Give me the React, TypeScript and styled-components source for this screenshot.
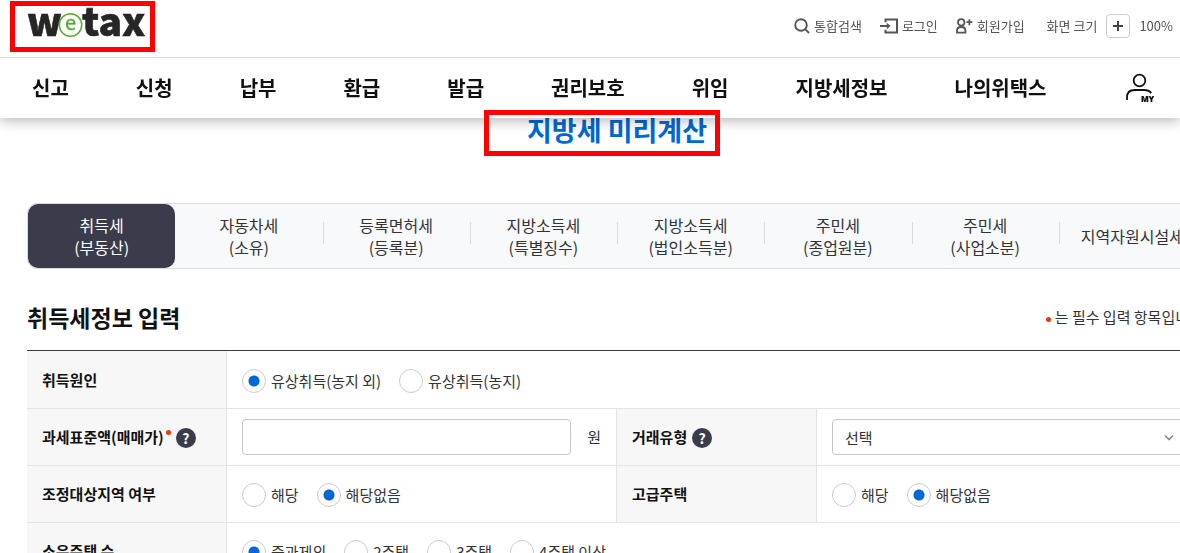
import React from "react";
import styled, { createGlobalStyle, css } from "styled-components";

const GlobalStyle = createGlobalStyle`
  *, *::before, *::after { box-sizing: border-box; }
  html, body { margin: 0; padding: 0; background: #fff; }
  body, button, input, select {
    font-family: "Noto Sans CJK KR", "Noto Sans", sans-serif;
    color: #333;
  }
`;

const Page = styled.div`
  position: relative;
  height: 100vh;
  overflow: hidden;
  font-size: 15px;
  line-height: 22px;
`;

const Header = styled.header`
  position: fixed;
  inset: 0 0 auto 0;
  z-index: 10;
  background: #fff;
  box-shadow: 0 3px 12px rgba(0, 0, 0, 0.28);
`;

const TopBar = styled.div`
  display: flex;
  justify-content: space-between;
  align-items: flex-start;
  height: 58px;
  padding: 0 7px 0 27px;
  border-bottom: 1px solid #ddd;
`;

const LogoLink = styled.a`
  display: block;
  padding-top: 4px;
  svg { display: block; }
`;

const Utilities = styled.div`
  display: flex;
  align-items: center;
  padding-top: 14px;
  gap: 18px;
  font-size: 13px;
  line-height: 24px;
  color: #555;
`;

const UtilityLink = styled.a`
  display: flex;
  align-items: center;
  gap: 4px;
  color: #555;
  text-decoration: none;
  svg { display: block; }
`;

const ZoomControl = styled.div`
  display: flex;
  align-items: center;
  gap: 9px;
  padding-left: 4px;
`;

const ZoomButton = styled.button`
  display: grid;
  place-items: center;
  width: 24px;
  height: 24px;
  padding: 0;
  border: 1px solid #ccc;
  border-radius: 4px;
  background: #fff;
`;

const Nav = styled.nav`
  display: flex;
  align-items: center;
  justify-content: space-between;
  height: 60px;
  padding: 0 24px 0 32px;
`;

const NavList = styled.ul`
  display: flex;
  gap: 67px;
  margin: 0;
  padding: 0;
  list-style: none;
`;

const NavLink = styled.a`
  font-size: 20px;
  line-height: 30px;
  font-weight: 700;
  color: #111;
  text-decoration: none;
  white-space: nowrap;
`;

const MyLink = styled.a`
  display: block;
  svg { display: block; }
`;

const Main = styled.main`
  margin: 0 -27px 0 27px;
  padding-top: 110px;
`;

const Title = styled.h1`
  margin: 0;
  font-size: 27px;
  line-height: 40px;
  font-weight: 700;
  text-align: center;
  color: #0068d6;
`;

const Tabs = styled.div`
  display: flex;
  height: 66px;
  margin-top: 53px;
  border: 1px solid #d9dbde;
  border-radius: 10px;
  background: #f7f9fb;
`;

const Tab = styled.button<{ $active?: boolean; $divided?: boolean }>`
  position: relative;
  flex: 1 1 0;
  padding: 0;
  border: 0;
  border-radius: 10px;
  background: transparent;
  font-size: 16px;
  line-height: 22px;
  white-space: pre-line;
  ${(p) => p.$active && css`
    background: #3a3b4b;
    color: #fff;
  `}
  ${(p) => p.$divided && css`
    &::before {
      content: "";
      position: absolute;
      left: 0;
      top: 18px;
      width: 1px;
      height: 22px;
      background: #d9dbde;
    }
  `}
`;

const SectionHead = styled.div`
  display: flex;
  align-items: center;
  justify-content: space-between;
  margin-top: 28px;
  height: 40px;
`;

const SectionTitle = styled.h2`
  margin: 0;
  font-size: 23px;
  line-height: 40px;
  font-weight: 700;
  color: #111;
`;

const RequiredNote = styled.p`
  display: flex;
  align-items: center;
  gap: 4px;
  margin: 0;
`;

const Dot = styled.span`
  width: 5px;
  height: 5px;
  margin-top: 4px;
  border-radius: 50%;
  background: #e83a05;
`;

const FormTable = styled.table`
  width: 100%;
  margin-top: 13px;
  border-collapse: separate;
  border-spacing: 0;
  border-top: 1px solid #3a3b4b;
  table-layout: fixed;

  th, td {
    height: 57px;
    padding: 0 15px;
    border-right: 1px solid #e4e4e4;
    border-bottom: 1px solid #e4e4e4;
    text-align: left;
  }
  tr:first-child > * { height: 58px; }
  th {
    background: #f7f7f7;
    font-weight: 700;
    color: #111;
  }
`;

const LabelCol = styled.col`
  width: 200px;
`;

const HeadLabel = styled.div`
  display: flex;
  align-items: center;
`;

const RequiredDot = styled(Dot)`
  align-self: flex-start;
  margin-left: 2px;
`;

const HelpButton = styled.button`
  width: 20px;
  height: 20px;
  margin: 2px 0 0 5px;
  padding: 0;
  border: 0;
  border-radius: 50%;
  background: #3a3b4b;
  color: #fff;
  font-size: 14px;
  line-height: 20px;
  font-weight: 700;
  text-align: center;
`;

const Options = styled.div`
  display: flex;
  gap: 18px;
  padding-top: 2px;
`;

const Option = styled.label`
  display: flex;
  align-items: center;
  gap: 5px;
  white-space: nowrap;
`;

const Radio = styled.input`
  appearance: none;
  flex: none;
  width: 24px;
  height: 24px;
  margin: 0;
  border: 1px solid #ccc;
  border-radius: 50%;
  background: #fff;
  &:checked {
    background: radial-gradient(circle, #0068d6 0 5px, #fff 6px);
  }
`;

const AmountField = styled.div`
  display: flex;
  align-items: center;
  gap: 16px;
`;

const fieldBox = css`
  height: 36px;
  border: 1px solid #c6c6c6;
  border-radius: 4px;
  background: #fff;
  font-size: 15px;
`;

const TextInput = styled.input`
  ${fieldBox}
  flex: 1;
  min-width: 0;
  padding: 0 12px;
`;

const SelectWrap = styled.div`
  position: relative;
  svg {
    position: absolute;
    right: 17px;
    top: 15px;
    pointer-events: none;
  }
`;

const Select = styled.select`
  ${fieldBox}
  display: block;
  appearance: none;
  width: 100%;
  padding: 0 12px;
`;

const Highlight = styled.div<{ $x: number; $y: number; $w: number; $h: number }>`
  position: absolute;
  z-index: 20;
  left: ${(p) => p.$x}px;
  top: ${(p) => p.$y}px;
  width: ${(p) => p.$w}px;
  height: ${(p) => p.$h}px;
  border: 5px solid #f00;
  pointer-events: none;
`;

const Logo = () => (
  <svg width="120" height="36" viewBox="0 0 120 36" role="img" aria-label="wetax">
    <g
      fill="#262626"
      stroke="#262626"
      strokeWidth="0.6"
      fontFamily="Noto Sans CJK KR, sans-serif"
      fontWeight="900"
      fontSize="39"
    >
      <text x="0" y="32">w</text>
      <text x="55" y="32">tax</text>
    </g>
    <circle cx="43.5" cy="21" r="11.2" fill="#fff" stroke="#56ab2f" strokeWidth="1.5" />
    <text
      x="43.5"
      y="26"
      textAnchor="middle"
      fill="#56ab2f"
      stroke="#56ab2f"
      strokeWidth="0.4"
      fontFamily="Open Sans, sans-serif"
      fontSize="20"
    >
      e
    </text>
  </svg>
);

const SearchIcon = () => (
  <svg width="16" height="16" viewBox="0 0 16 16" fill="none" stroke="#555" strokeWidth="1.9">
    <circle cx="7" cy="7" r="5.8" />
    <path d="M11.2 11.2 15 15" />
  </svg>
);

const LoginIcon = () => (
  <svg width="18" height="16" viewBox="0 0 18 16" fill="none" stroke="#555" strokeWidth="2">
    <path d="M5.5 4.200V1.500H17v13H5.500v-2.700" />
    <path d="M0 8h8" />
    <path d="M6.800 4.800 10.600 8l-3.800 3.200z" fill="#555" stroke="none" />
  </svg>
);

const JoinIcon = () => (
  <svg width="17" height="16" viewBox="0 0 17 16" fill="none" stroke="#555" strokeWidth="1.8">
    <circle cx="5.2" cy="4.4" r="3.2" />
    <path d="M1 14.6v-2.2C1 10 2.6 9 5.200 9s4.200 1 4.200 3.400v2.200z" />
    <path d="M10.400 4.200h6M13.400 1.200v6" />
  </svg>
);

const PlusIcon = () => (
  <svg width="12" height="12" viewBox="0 0 12 12" stroke="#444" strokeWidth="2">
    <path d="M6 1v10M1 6h10" />
  </svg>
);

const MyIcon = () => (
  <svg width="30" height="30" viewBox="0 0 30 30" fill="none" stroke="#111" strokeWidth="1.8">
    <circle cx="13.500" cy="7.500" r="5.800" />
    <path d="M1 27v-2.500c0-5 3-7.500 7.500-7.500h9.500c3.500 0 6 1 7.200 3.200" />
    <text
      x="15"
      y="29"
      fill="#111"
      stroke="#111"
      strokeWidth="0.2"
      fontFamily="Open Sans, sans-serif"
      fontWeight="800"
      fontSize="8"
    >
      MY
    </text>
  </svg>
);

const ChevronIcon = () => (
  <svg width="10" height="8" viewBox="0 0 10 8" fill="none" stroke="#888" strokeWidth="1.6">
    <path d="M1 1.500 5 5.500 9 1.500" />
  </svg>
);

const menu = ["신고", "신청", "납부", "환급", "발급", "권리보호", "위임", "지방세정보", "나의위택스"];

const taxes = [
  "취득세\n(부동산)",
  "자동차세\n(소유)",
  "등록면허세\n(등록분)",
  "지방소득세\n(특별징수)",
  "지방소득세\n(법인소득분)",
  "주민세\n(종업원분)",
  "주민세\n(사업소분)",
  "지역자원시설세",
];

type RadioGroupProps = { name: string; label: string; options: string[]; selected: number };

const RadioGroup = ({ name, label, options, selected }: RadioGroupProps) => (
  <Options role="radiogroup" aria-label={label}>
    {options.map((text, i) => (
      <Option key={text}>
        <Radio type="radio" name={name} defaultChecked={i === selected} />
        {text}
      </Option>
    ))}
  </Options>
);

export default function App() {
  return (
    <Page>
      <GlobalStyle />
      <Header>
        <TopBar>
          <LogoLink href="#home"><Logo /></LogoLink>
          <Utilities>
            <UtilityLink href="#search"><SearchIcon />통합검색</UtilityLink>
            <UtilityLink href="#login"><LoginIcon />로그인</UtilityLink>
            <UtilityLink href="#join"><JoinIcon />회원가입</UtilityLink>
            <ZoomControl>
              <span>화면 크기</span>
              <ZoomButton type="button" aria-label="화면 확대"><PlusIcon /></ZoomButton>
              <span>100%</span>
            </ZoomControl>
          </Utilities>
        </TopBar>
        <Nav>
          <NavList>
            {menu.map((item) => (
              <li key={item}><NavLink href="#menu">{item}</NavLink></li>
            ))}
          </NavList>
          <MyLink href="#my" aria-label="나의 메뉴"><MyIcon /></MyLink>
        </Nav>
      </Header>

      <Main>
        <Title>지방세 미리계산</Title>
        <Tabs role="tablist">
          {taxes.map((tax, i) => (
            <Tab key={tax} type="button" role="tab" aria-selected={i === 0} $active={i === 0} $divided={i > 1}>
              {tax}
            </Tab>
          ))}
        </Tabs>

        <SectionHead>
          <SectionTitle>취득세정보 입력</SectionTitle>
          <RequiredNote><Dot />는 필수 입력 항목입니다.</RequiredNote>
        </SectionHead>

        <FormTable>
          <colgroup>
            <LabelCol />
            <col />
            <LabelCol />
            <col />
          </colgroup>
          <tbody>
            <tr>
              <th scope="row">취득원인</th>
              <td colSpan={3}>
                <RadioGroup name="cause" label="취득원인" options={["유상취득(농지 외)", "유상취득(농지)"]} selected={0} />
              </td>
            </tr>
            <tr>
              <th scope="row">
                <HeadLabel>
                  <label htmlFor="amount">과세표준액(매매가)</label>
                  <RequiredDot />
                  <HelpButton type="button">?</HelpButton>
                </HeadLabel>
              </th>
              <td>
                <AmountField>
                  <TextInput id="amount" type="text" />
                  <span>원</span>
                </AmountField>
              </td>
              <th scope="row">
                <HeadLabel>
                  <label htmlFor="deal">거래유형</label>
                  <HelpButton type="button">?</HelpButton>
                </HeadLabel>
              </th>
              <td>
                <SelectWrap>
                  <Select id="deal"><option>선택</option></Select>
                  <ChevronIcon />
                </SelectWrap>
              </td>
            </tr>
            <tr>
              <th scope="row">조정대상지역 여부</th>
              <td>
                <RadioGroup name="area" label="조정대상지역 여부" options={["해당", "해당없음"]} selected={1} />
              </td>
              <th scope="row">고급주택</th>
              <td>
                <RadioGroup name="luxury" label="고급주택" options={["해당", "해당없음"]} selected={1} />
              </td>
            </tr>
            <tr>
              <th scope="row">소유주택 수</th>
              <td colSpan={3}>
                <RadioGroup
                  name="houses"
                  label="소유주택 수"
                  options={["중과제외", "2주택", "3주택", "4주택 이상"]}
                  selected={0}
                />
              </td>
            </tr>
          </tbody>
        </FormTable>
      </Main>

      <Highlight $x={10} $y={1} $w={145} $h={51} />
      <Highlight $x={484} $y={110} $w={236} $h={46} />
    </Page>
  );
}
